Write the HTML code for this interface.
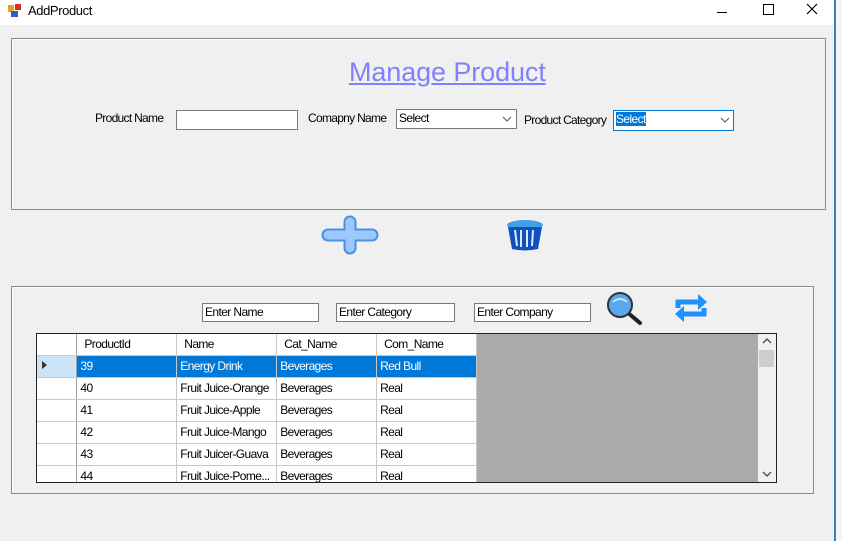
<!DOCTYPE html>
<html><head><style>
*{margin:0;padding:0;box-sizing:border-box}
body{width:842px;height:541px;background:#f0f0f0;position:relative;overflow:hidden;font-family:"Liberation Sans",sans-serif;font-size:12px;color:#000}
.a{position:absolute}
.lbl{position:absolute;font-size:12px;letter-spacing:-0.7px}
.in{position:absolute;background:#fff;border:1px solid #7a7a7a;font-size:12px;padding:2px 2px;letter-spacing:-0.6px;line-height:13px}
.grp{position:absolute;border:1px solid #8a8a8a;box-shadow:inset 1px 1px 0 #fff}
table{border-collapse:collapse;position:absolute;left:37px;top:334px}
td{height:22px;border-right:1px solid #c8c8c8;border-bottom:1px solid #c8c8c8;font-size:12px;padding:0 3px;white-space:nowrap;overflow:hidden;letter-spacing:-0.6px;background:#fff}
tr.h td{height:21px;background:#fff;border-bottom:1px solid #c8c8c8;padding-left:7px}
tr.s td{background:#0078d7;color:#fff}
td.rh{background:#fff;border-right:1px solid #a0a0a0}
tr.s td.rh{background:#cce4f7}
</style></head><body>
<div class="a" style="left:0;top:0;width:834px;height:25px;background:#fff"></div>
<div class="a" style="left:834px;top:0;width:8px;height:541px;background:#f4f4f4;border-left:2px solid #3c7fc0"></div>
<svg class="a" style="left:7px;top:3px" width="16" height="16"><rect x="1" y="2" width="6" height="7" fill="#e8a020"/><rect x="8" y="1" width="6" height="6" fill="#d03020"/><rect x="4" y="8" width="7" height="6" fill="#3060c0"/></svg>
<div class="lbl" style="left:28px;top:3px;font-size:13px;letter-spacing:-0.4px">AddProduct</div>
<div class="a" style="left:717px;top:12px;width:10px;height:1px;background:#000"></div>
<div class="a" style="left:763px;top:4px;width:11px;height:11px;border:1px solid #000"></div>
<svg class="a" style="left:806px;top:3px" width="12" height="12"><path d="M1 1L11 11M11 1L1 11" stroke="#000" stroke-width="1.2"/></svg>

<div class="grp" style="left:11px;top:38px;width:815px;height:172px"></div>
<div class="a" style="left:349px;top:57px;font-size:27px;color:#8080ff;text-decoration:underline;letter-spacing:-0.1px">Manage Product</div>
<div class="lbl" style="left:95px;top:111px">Product Name</div>
<div class="in" style="left:176px;top:110px;width:122px;height:20px"></div>
<div class="lbl" style="left:308px;top:111px">Comapny Name</div>
<div class="in" style="left:396px;top:109px;width:121px;height:20px">Select</div>
<svg class="a" style="left:502px;top:115px" width="10" height="8"><path d="M1 2L5 6L9 2" stroke="#555" fill="none"/></svg>
<div class="lbl" style="left:524px;top:113px">Product Category</div>
<div class="in" style="left:613px;top:110px;width:121px;height:21px;border-color:#0078d7"><span style="background:#0078d7;color:#fff">Select</span></div>
<svg class="a" style="left:720px;top:116px" width="10" height="8"><path d="M1 2L5 6L9 2" stroke="#555" fill="none"/></svg>

<svg class="a" style="left:318px;top:212px" width="66" height="44"><path d="M32 10v26M10 23h44" stroke="#4a90e0" stroke-width="13" stroke-linecap="round"/><path d="M32 10v26M10 23h44" stroke="#9cc8ff" stroke-width="9" stroke-linecap="round"/></svg>
<svg class="a" style="left:504px;top:218px" width="42" height="34"><ellipse cx="21" cy="7" rx="18" ry="5" fill="#40a0e8"/><path d="M4 9h34l-4 22q-13 3-26 0z" fill="#1050c0"/><path d="M11 12l2 16M17 12v17M23 12v17M29 12l-1 16" stroke="#e0eaff" stroke-width="2"/></svg>

<div class="grp" style="left:11px;top:286px;width:803px;height:208px"></div>
<div class="in" style="left:202px;top:303px;width:117px;height:19px">Enter Name</div>
<div class="in" style="left:336px;top:303px;width:119px;height:19px">Enter Category</div>
<div class="in" style="left:474px;top:303px;width:117px;height:19px">Enter Company</div>
<svg class="a" style="left:604px;top:290px" width="40" height="36"><line x1="23" y1="22" x2="36" y2="33" stroke="#222" stroke-width="4" stroke-linecap="round"/><circle cx="16" cy="15" r="12" fill="#5aa8f0" stroke="#333" stroke-width="2"/><path d="M9 12q7-6 14 0" stroke="#cfe6ff" stroke-width="2" fill="none"/></svg>
<svg class="a" style="left:672px;top:292px" width="38" height="32"><path d="M6 16v-6h22" stroke="#1e90ff" stroke-width="5" fill="none"/><path d="M26 2l9 8-9 8z" fill="#1e90ff"/><path d="M32 16v6h-22" stroke="#1e90ff" stroke-width="5" fill="none"/><path d="M12 14l-9 8 9 8z" fill="#1e90ff"/></svg>

<div class="a" style="left:36px;top:333px;width:741px;height:150px;border:1px solid #222;background:#ababab"></div>
<div class="a" style="left:758px;top:334px;width:18px;height:148px;background:#f0f0f0"></div>
<div class="a" style="left:759px;top:350px;width:15px;height:17px;background:#cdcdcd"></div>
<svg class="a" style="left:761px;top:337px" width="12" height="8"><path d="M2 6L6 2L10 6" stroke="#555" stroke-width="1.5" fill="none"/></svg>
<svg class="a" style="left:761px;top:470px" width="12" height="8"><path d="M2 2L6 6L10 2" stroke="#555" stroke-width="1.5" fill="none"/></svg>
<div class="a" style="left:37px;top:334px;width:440px;height:148px;overflow:hidden">
<table style="left:0;top:0">
<tr class="h"><td class="rh" style="width:40px"></td><td style="width:100px">ProductId</td><td style="width:100px">Name</td><td style="width:100px">Cat_Name</td><td style="width:100px">Com_Name</td></tr>
<tr class="s"><td class="rh"><svg width="8" height="10"><path d="M2 1l5 4-5 4z" fill="#333"/></svg></td><td>39</td><td>Energy Drink</td><td>Beverages</td><td>Red Bull</td></tr>
<tr><td class="rh"></td><td>40</td><td>Fruit Juice-Orange</td><td>Beverages</td><td>Real</td></tr>
<tr><td class="rh"></td><td>41</td><td>Fruit Juice-Apple</td><td>Beverages</td><td>Real</td></tr>
<tr><td class="rh"></td><td>42</td><td>Fruit Juice-Mango</td><td>Beverages</td><td>Real</td></tr>
<tr><td class="rh"></td><td>43</td><td>Fruit Juicer-Guava</td><td>Beverages</td><td>Real</td></tr>
<tr><td class="rh"></td><td>44</td><td>Fruit Juice-Pome...</td><td>Beverages</td><td>Real</td></tr>
</table></div>
</body></html>
